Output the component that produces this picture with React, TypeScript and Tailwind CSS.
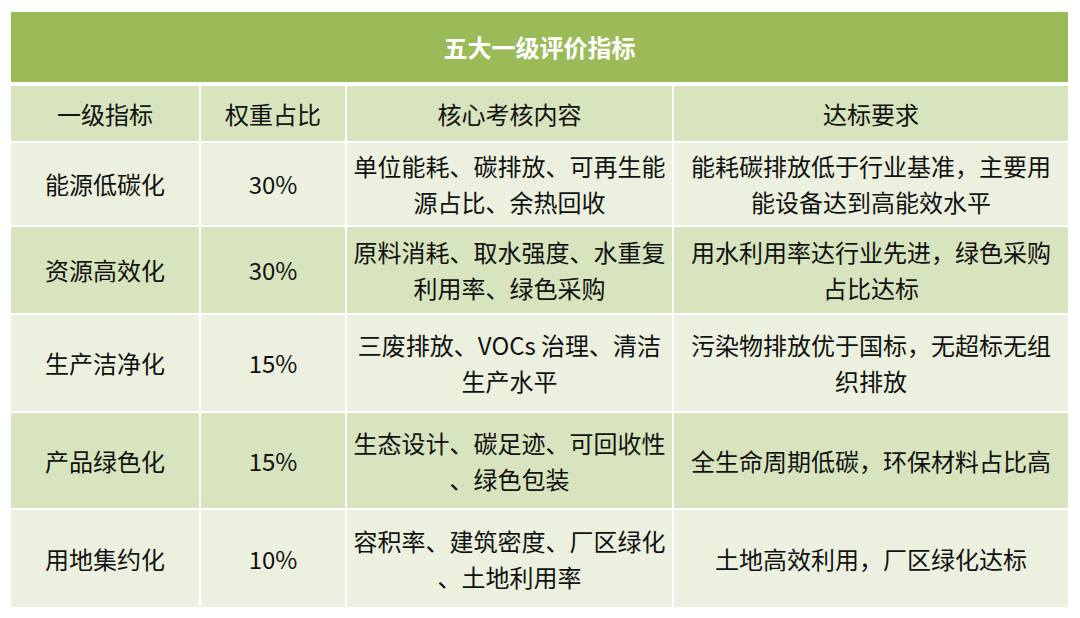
import React from "react";

const rows: { a: string; b: string; c: string[]; d: string[]; dark: boolean }[] = [
  { a: "能源低碳化", b: "30%", c: ["单位能耗、碳排放、可再生能", "源占比、余热回收"], d: ["能耗碳排放低于行业基准，主要用", "能设备达到高能效水平"], dark: false },
  { a: "资源高效化", b: "30%", c: ["原料消耗、取水强度、水重复", "利用率、绿色采购"], d: ["用水利用率达行业先进，绿色采购", "占比达标"], dark: true },
  { a: "生产洁净化", b: "15%", c: ["三废排放、VOCs 治理、清洁", "生产水平"], d: ["污染物排放优于国标，无超标无组", "织排放"], dark: false },
  { a: "产品绿色化", b: "15%", c: ["生态设计、碳足迹、可回收性", "、绿色包装"], d: ["全生命周期低碳，环保材料占比高"], dark: true },
  { a: "用地集约化", b: "10%", c: ["容积率、建筑密度、厂区绿化", "、土地利用率"], d: ["土地高效利用，厂区绿化达标"], dark: false },
];

function Cell({ lines, dark }: { lines: string[]; dark: boolean }) {
  return (
    <div className={`flex flex-col items-center justify-center text-center ${dark ? "bg-[#d7e4bd]" : "bg-[#ebf1de]"}`}>
      {lines.map((l, i) => (
        <div key={i} className="whitespace-nowrap leading-[36px]">{l}</div>
      ))}
    </div>
  );
}

export default function App() {
  return (
    <div
      className="w-[1080px] h-[618px] bg-white pt-[12px] pl-[11px] text-[24px] text-[#111]"
      style={{ fontFamily: '"Noto Sans CJK SC", "Noto Sans", sans-serif' }}
    >
      <div className="w-[1057px] h-[70px] bg-[#9bbb59] flex items-center justify-center text-white font-bold">
        五大一级评价指标
      </div>
      <div className="mt-[4px] w-[1057px] grid grid-cols-[188px_144px_325px_394px] grid-rows-[55px_82px_86px_96px_95px_97px] gap-[2px] bg-white">
        <Cell lines={["一级指标"]} dark />
        <Cell lines={["权重占比"]} dark />
        <Cell lines={["核心考核内容"]} dark />
        <Cell lines={["达标要求"]} dark />
        {rows.map((r, i) => (
          <React.Fragment key={i}>
            <Cell lines={[r.a]} dark={r.dark} />
            <Cell lines={[r.b]} dark={r.dark} />
            <Cell lines={r.c} dark={r.dark} />
            <Cell lines={r.d} dark={r.dark} />
          </React.Fragment>
        ))}
      </div>
    </div>
  );
}
